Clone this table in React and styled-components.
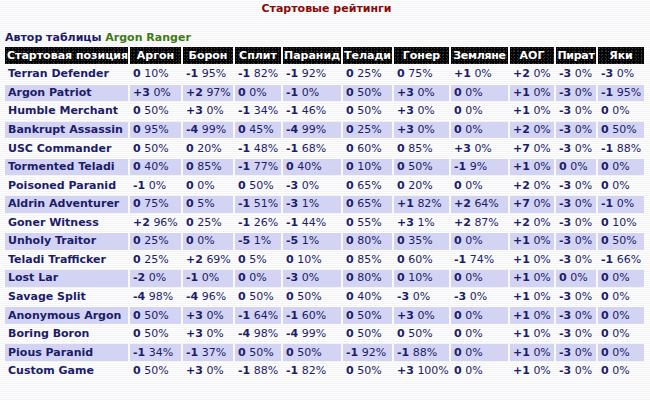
import React from "react";
import styled, { createGlobalStyle } from "styled-components";

const Global = createGlobalStyle`
  html, body {
    margin: 0;
    padding: 0;
  }
  body {
    background-color: #ffffff;
    background-image: repeating-linear-gradient(
      to bottom,
      #ffffff 0px,
      #ffffff 1px,
      #f3f3f5 1px,
      #f3f3f5 2px
    );
    font-family: "DejaVu Sans", Verdana, sans-serif;
    width: 650px;
    height: 400px;
    overflow: hidden;
  }
`;

const Page = styled.div`
  display: flex;
  flex-direction: column;
  padding: 0 0 0 3px;
`;

const Title = styled.h1`
  margin: 2px 0 0 0;
  font-size: 11px;
  line-height: 14px;
  font-weight: bold;
  color: #8b0a0a;
  text-align: center;
`;

const Author = styled.div`
  margin: 15px 0 0 2px;
  font-size: 11px;
  line-height: 14px;
  font-weight: bold;
  color: #1c1c6a;
`;

const AuthorName = styled.span`
  color: #3f7a14;
`;

const Table = styled.table`
  border-collapse: separate;
  border-spacing: 2px;
  table-layout: fixed;
  width: 643px;
  font-size: 11px;
`;

const HeadCell = styled.th`
  box-sizing: border-box;
  width: ${(p) => p.$w}px;
  height: 17px;
  padding: 0 ${(p) => (p.$left ? "2px" : "0")};
  line-height: 15px;
  background-color: #050505;
  background-image: radial-gradient(circle, #3a3a3a 0.6px, transparent 0.8px),
    radial-gradient(circle, #262626 0.6px, transparent 0.8px);
  background-size: 3px 3px, 5px 4px;
  background-position: 0 0, 1px 2px;
  color: #ffffff;
  font-weight: bold;
  letter-spacing: ${(p) => (p.$tight ? "-0.3px" : "0")};
  text-align: ${(p) => (p.$left ? "left" : "center")};
  white-space: nowrap;
  overflow: hidden;
`;

const Cell = styled.td`
  box-sizing: border-box;
  height: 16.57px;
  padding: 0 3px;
  line-height: 14px;
  color: #1c1c6a;
  background: ${(p) => (p.$alt ? "#d3d3f3" : "transparent")};
  white-space: nowrap;
  overflow: hidden;
`;

const NameCell = styled(Cell)`
  font-weight: bold;
`;

const Mod = styled.b`
  font-weight: bold;
`;

const Footer = styled.div`
  margin-top: 19px;
  border-top: 1px dashed #c8cbe0;
  margin-right: 3px;
`;

const columns = [
  { t: "Стартовая позиция", w: 123, left: true },
  { t: "Аргон", w: 51 },
  { t: "Борон", w: 50 },
  { t: "Сплит", w: 46 },
  { t: "Паранид", w: 58 },
  { t: "Телади", w: 49 },
  { t: "Гонер", w: 55 },
  { t: "Земляне", w: 57, tight: true },
  { t: "АОГ", w: 44 },
  { t: "Пират", w: 40, tight: true },
  { t: "Яки", w: 46 },
];

const rows = [
  ["Terran Defender", "0 10%", "-1 95%", "-1 82%", "-1 92%", "0 25%", "0 75%", "+1 0%", "+2 0%", "-3 0%", "-3 0%"],
  ["Argon Patriot", "+3 0%", "+2 97%", "0 0%", "-1 0%", "0 50%", "+3 0%", "0 0%", "+1 0%", "-3 0%", "-1 95%"],
  ["Humble Merchant", "0 50%", "+3 0%", "-1 34%", "-1 46%", "0 50%", "+3 0%", "0 0%", "+1 0%", "-3 0%", "0 0%"],
  ["Bankrupt Assassin", "0 95%", "-4 99%", "0 45%", "-4 99%", "0 25%", "+3 0%", "0 0%", "+2 0%", "-3 0%", "0 50%"],
  ["USC Commander", "0 50%", "0 20%", "-1 48%", "-1 68%", "0 60%", "0 85%", "+3 0%", "+7 0%", "-3 0%", "-1 88%"],
  ["Tormented Teladi", "0 40%", "0 85%", "-1 77%", "0 40%", "0 10%", "0 50%", "-1 9%", "+1 0%", "0 0%", "0 0%"],
  ["Poisoned Paranid", "-1 0%", "0 0%", "0 50%", "-3 0%", "0 65%", "0 20%", "0 0%", "+2 0%", "-3 0%", "0 0%"],
  ["Aldrin Adventurer", "0 75%", "0 5%", "-1 51%", "-3 1%", "0 65%", "+1 82%", "+2 64%", "+7 0%", "-3 0%", "-1 0%"],
  ["Goner Witness", "+2 96%", "0 25%", "-1 26%", "-1 44%", "0 55%", "+3 1%", "+2 87%", "+2 0%", "-3 0%", "0 10%"],
  ["Unholy Traitor", "0 25%", "0 0%", "-5 1%", "-5 1%", "0 80%", "0 35%", "0 0%", "+1 0%", "-3 0%", "0 50%"],
  ["Teladi Trafficker", "0 25%", "+2 69%", "0 5%", "0 10%", "0 85%", "0 60%", "-1 74%", "+1 0%", "-3 0%", "-1 66%"],
  ["Lost Lar", "-2 0%", "-1 0%", "0 0%", "-3 0%", "0 80%", "0 10%", "0 0%", "+1 0%", "0 0%", "0 0%"],
  ["Savage Split", "-4 98%", "-4 96%", "0 50%", "0 50%", "0 40%", "-3 0%", "-3 0%", "+1 0%", "-3 0%", "0 0%"],
  ["Anonymous Argon", "0 50%", "+3 0%", "-1 64%", "-1 60%", "0 50%", "+3 0%", "0 0%", "+1 0%", "-3 0%", "0 0%"],
  ["Boring Boron", "0 50%", "+3 0%", "-4 98%", "-4 99%", "0 50%", "0 50%", "0 0%", "+1 0%", "-3 0%", "0 0%"],
  ["Pious Paranid", "-1 34%", "-1 37%", "0 50%", "0 50%", "-1 92%", "-1 88%", "0 0%", "+1 0%", "-3 0%", "0 0%"],
  ["Custom Game", "0 50%", "+3 0%", "-1 88%", "-1 82%", "0 50%", "+3 100%", "0 0%", "+1 0%", "-3 0%", "0 0%"],
];

function Value({ v }) {
  const [mod, pct] = v.split(" ");
  return (
    <>
      <Mod>{mod}</Mod> {pct}
    </>
  );
}

export default function App() {
  return (
    <>
      <Global />
      <Page>
        <Title>Стартовые рейтинги</Title>
        <Author>
          Автор таблицы <AuthorName>Argon Ranger</AuthorName>
        </Author>
        <Table>
          <thead>
            <tr>
              {columns.map((c) => (
                <HeadCell key={c.t} $w={c.w} $left={c.left} $tight={c.tight}>
                  {c.t}
                </HeadCell>
              ))}
            </tr>
          </thead>
          <tbody>
            {rows.map((r, i) => (
              <tr key={r[0]}>
                <NameCell $alt={i % 2 === 1}>{r[0]}</NameCell>
                {r.slice(1).map((v, j) => (
                  <Cell key={j} $alt={i % 2 === 1}>
                    <Value v={v} />
                  </Cell>
                ))}
              </tr>
            ))}
          </tbody>
        </Table>
        <Footer />
      </Page>
    </>
  );
}
